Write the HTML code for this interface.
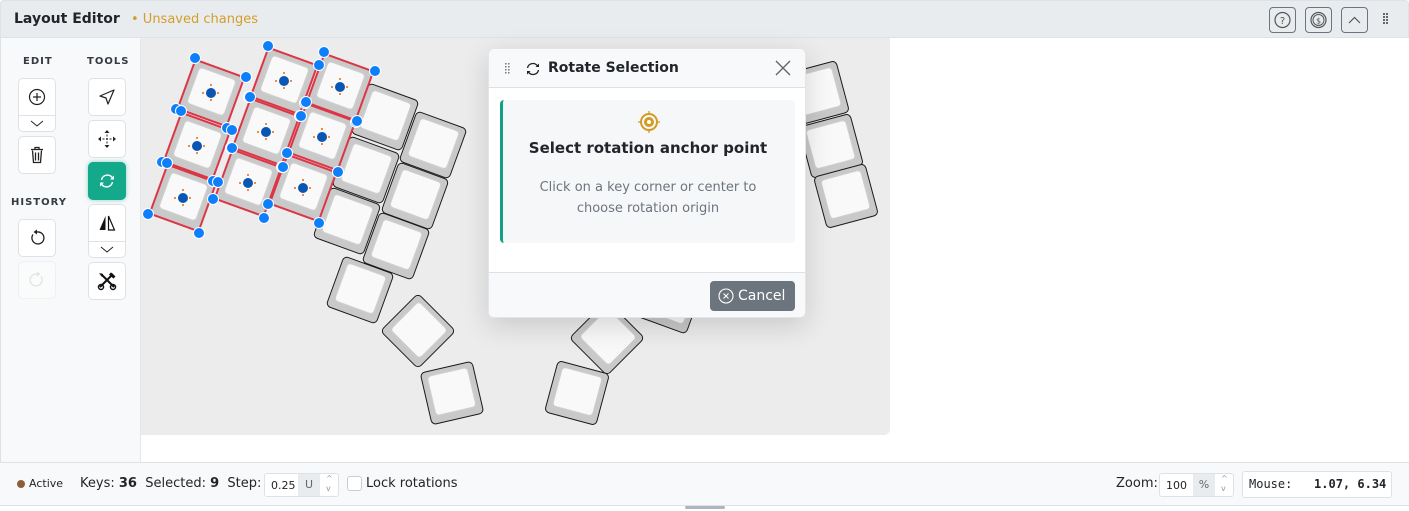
<!DOCTYPE html>
<html><head><meta charset="utf-8"><style>
*{box-sizing:border-box;margin:0;padding:0}
body{width:1409px;height:511px;overflow:hidden;background:#fff;font-family:"DejaVu Sans","Liberation Sans",sans-serif;position:relative;color:#212529}
.hdr{position:absolute;left:0;top:0;width:1409px;height:38px;background:#e9ecef;border:1px solid #dee2e6;border-radius:4px 4px 0 0}
.hdr .t{position:absolute;left:13px;top:10px;font-size:14px;font-weight:bold;color:#212529}
.hdr .u{position:absolute;left:130px;top:11px;font-size:13px;color:#d39e2a}
.hb{position:absolute;top:6px;width:27px;height:26px;border:1px solid #6c757d;border-radius:4px}
.side{position:absolute;left:0;top:38px;width:141px;height:424px;background:#f8f9fa;border-left:1px solid #dee2e6;border-right:1px solid #e5e7ea}
.lbl{position:absolute;font-size:10px;font-weight:bold;letter-spacing:1px;color:#343a40}
.btn{position:absolute;width:38px;background:#fff;border:1px solid #dee2e6;border-radius:5px;display:flex;align-items:center;justify-content:center}
.canvas{position:absolute;left:141px;top:38px;width:749px;height:397px;background:#ececec;border-radius:0 0 6px 0;overflow:hidden}
.key{position:absolute;width:54px;height:54px;margin:-27px 0 0 -27px;background:#c9c9c9;border:1.5px solid #1a1a1a;border-radius:5px}
.key:after{content:"";position:absolute;left:6px;top:5px;right:6px;bottom:8px;background:#f9f9f9;border-radius:3px;box-shadow:0 0 2px #ddd}
.key.sel{border:2px solid #dc3545;border-color:#dc3545}
.dot{position:absolute;width:12px;height:12px;margin:-6px 0 0 -6px;border-radius:50%;background:#0d7ffb;border:1.5px solid #fff}
.cd{position:absolute;width:10px;height:10px;margin:-5px 0 0 -5px;border-radius:50%;background:#0a56b3}
.tk{position:absolute;width:2px;height:2px;background:#f08a4b}
.dlg{position:absolute;left:488px;top:48px;width:318px;height:270px;background:#fff;border:1px solid #e3e5e8;border-radius:6px;box-shadow:0 8px 28px rgba(0,0,0,.15);overflow:hidden}
.foot{position:absolute;left:0;top:462px;width:1409px;height:44px;background:#f8f9fa;border-top:1px solid #dee2e6;border-bottom:1px solid #dee2e6;font-size:13px}
.inp{position:absolute;top:10px;height:24px;border:1px solid #dee2e6;border-radius:3px;background:#fff;font-size:11px}
</style></head><body>
<div class="hdr"><div class="t">Layout Editor</div><div class="u">• Unsaved changes</div>
<div class="hb" style="left:1268px"><svg width="25" height="24"><circle cx="12.5" cy="12" r="7.5" fill="none" stroke="#555" stroke-width="1.2"/><text x="12.5" y="16" font-size="10" text-anchor="middle" fill="#555" font-family="DejaVu Sans">?</text></svg></div>
<div class="hb" style="left:1304px"><svg width="25" height="24"><circle cx="12.5" cy="12" r="7.5" fill="none" stroke="#555" stroke-width="1.2"/><circle cx="12.5" cy="12" r="5.5" fill="none" stroke="#555" stroke-width="1"/><text x="12.5" y="15.5" font-size="8" text-anchor="middle" fill="#555" font-family="DejaVu Sans">$</text></svg></div>
<div class="hb" style="left:1340px"><svg width="25" height="24"><path d="M7 15l5.5-5.5L18 15" fill="none" stroke="#555" stroke-width="1.2"/></svg></div>
<svg style="position:absolute;left:1382px;top:12px" width="6" height="14"><g fill="#666"><rect x="0" y="0" width="2" height="2"/><rect x="3" y="0" width="2" height="2"/><rect x="0" y="3" width="2" height="2"/><rect x="3" y="3" width="2" height="2"/><rect x="0" y="6" width="2" height="2"/><rect x="3" y="6" width="2" height="2"/><rect x="0" y="9" width="2" height="2"/><rect x="3" y="9" width="2" height="2"/></g></svg>
</div>
<div class="side">
<div class="lbl" style="left:22px;top:18px">EDIT</div>
<div class="lbl" style="left:86px;top:18px">TOOLS</div>
<div class="lbl" style="left:10px;top:159px">HISTORY</div>
<div class="btn" style="left:17px;top:40px;height:54px;display:block"><svg width="36" height="52"><circle cx="18" cy="18" r="7.5" fill="none" stroke="#222" stroke-width="1.2"/><path d="M18 14v8M14 18h8" stroke="#222" stroke-width="1.2"/><path d="M0 36.5h36" stroke="#dee2e6"/><path d="M12 42l6 5 6-5" fill="none" stroke="#222" stroke-width="1"/></svg></div>
<div class="btn" style="left:17px;top:98px;height:38px"><svg width="16" height="18"><path d="M2 3.5h12M6 3.5V1.5h4v2M3.5 4.5l1 12h7l1-12M6.5 6.5v8M9.5 6.5v8" fill="none" stroke="#222" stroke-width="1.3"/></svg></div>
<div class="btn" style="left:17px;top:181px;height:38px"><svg width="18" height="18"><path d="M5 5.5A6 6 0 1 0 9 3" fill="none" stroke="#222" stroke-width="1.3"/><path d="M9 0.5v5l-3.5-2.5z" fill="#222"/></svg></div>
<div class="btn" style="left:17px;top:223px;height:38px;opacity:.35"><svg width="18" height="18"><path d="M13 5.5A6 6 0 1 1 9 3" fill="none" stroke="#bbb" stroke-width="1.3"/><path d="M9 0.5v5l3.5-2.5z" fill="#bbb"/></svg></div>
<div class="btn" style="left:87px;top:40px;height:38px"><svg width="18" height="18"><path d="M16 2L2 8l6 2 2 6z" fill="none" stroke="#222" stroke-width="1.2" stroke-linejoin="round"/></svg></div>
<div class="btn" style="left:87px;top:82px;height:38px"><svg width="20" height="20"><path d="M10 2v16M2 10h16" stroke="#222" stroke-width="1" stroke-dasharray="2 1.5"/><path d="M10 1l-2.5 3h5zM10 19l-2.5-3h5zM1 10l3-2.5v5zM19 10l-3-2.5v5z" fill="#222"/></svg></div>
<div class="btn" style="left:87px;top:124px;height:38px;background:#14a98b;border-color:#14a98b;box-shadow:0 0 4px rgba(20,169,139,.5)"><svg width="18" height="18"><path d="M3.5 8a6 6 0 0 1 11-2M14.5 10a6 6 0 0 1-11 2" fill="none" stroke="#fff" stroke-width="1.4"/><path d="M16 3.5v4h-4zM2 14.5v-4h4z" fill="#fff"/></svg></div>
<div class="btn" style="left:87px;top:166px;height:54px;display:block"><svg width="36" height="52"><path d="M16.5 11v14h-6z" fill="#111"/><path d="M19.5 11v14h6z" fill="none" stroke="#111" stroke-width="1.2"/><path d="M0 36.5h36" stroke="#dee2e6"/><path d="M12 42l6 5 6-5" fill="none" stroke="#222" stroke-width="1"/></svg></div>
<div class="btn" style="left:87px;top:224px;height:38px"><svg width="20" height="20"><path d="M4 3l13 13M16 3L3 16" stroke="#111" stroke-width="2"/><circle cx="4" cy="16" r="2.5" fill="none" stroke="#111" stroke-width="1.5"/><circle cx="16" cy="16" r="2.5" fill="none" stroke="#111" stroke-width="1.5"/><path d="M2 2l4 1 -1 3z" fill="#111"/><path d="M13 2.5l4.5 4" stroke="#111" stroke-width="3"/></svg></div>
</div>
<div class="canvas" id="cv"></div>
<div class="dlg">
<div style="position:absolute;left:0;top:0;width:318px;height:39px;background:#f8f9fa;border-bottom:1px solid #dee2e6"></div>
<svg style="position:absolute;left:16px;top:14px" width="5" height="12"><g fill="#777"><rect x="0" y="0" width="1.5" height="1.5"/><rect x="3" y="0" width="1.5" height="1.5"/><rect x="0" y="3" width="1.5" height="1.5"/><rect x="3" y="3" width="1.5" height="1.5"/><rect x="0" y="6" width="1.5" height="1.5"/><rect x="3" y="6" width="1.5" height="1.5"/><rect x="0" y="9" width="1.5" height="1.5"/><rect x="3" y="9" width="1.5" height="1.5"/></g></svg>
<svg style="position:absolute;left:36px;top:12px" width="16" height="16"><path d="M2.5 7a5.5 5.5 0 0 1 10-2M13.5 9a5.5 5.5 0 0 1-10 2" fill="none" stroke="#222" stroke-width="1.3"/><path d="M14 2.5v3.5h-3.5zM2 13.5V10h3.5z" fill="#222"/></svg>
<div style="position:absolute;left:59px;top:11px;font-size:14px;font-weight:bold">Rotate Selection</div>
<svg style="position:absolute;left:286px;top:11px" width="16" height="16"><path d="M1 1l14 14M15 1L1 15" stroke="#666" stroke-width="1.4"/></svg>
<div style="position:absolute;left:11px;top:51px;width:295px;height:143px;background:#f6f7f9;border-left:3px solid #13a085;border-radius:4px"></div>
<svg style="position:absolute;left:148px;top:61px" width="24" height="24"><circle cx="12" cy="12" r="8" fill="none" stroke="#d49a22" stroke-width="2"/><circle cx="12" cy="12" r="5" fill="#d49a22"/><circle cx="12" cy="12" r="2" fill="#fff"/><path d="M12 1v4M12 19v4M1 12h4M19 12h4" stroke="#d49a22" stroke-width="1.3"/></svg>
<div style="position:absolute;left:0;width:318px;top:90px;text-align:center;font-size:15px;font-weight:bold;color:#212529">Select rotation anchor point</div>
<div style="position:absolute;left:0;width:318px;top:128px;text-align:center;font-size:13px;line-height:21px;color:#6c757d">Click on a key corner or center to<br>choose rotation origin</div>
<div style="position:absolute;left:0;top:223px;width:318px;height:47px;background:#f8f9fa;border-top:1px solid #dee2e6"></div>
<div style="position:absolute;left:221px;top:232px;width:85px;height:30px;background:#6c757d;border-radius:4px;color:#fff;font-size:14px;line-height:30px;padding-left:28px">Cancel</div>
<svg style="position:absolute;left:229px;top:239px" width="16" height="16"><circle cx="8" cy="8" r="7" fill="none" stroke="#fff" stroke-width="1.1"/><path d="M5.5 5.5l5 5M10.5 5.5l-5 5" stroke="#fff" stroke-width="1.1"/></svg>
</div>
<div class="foot">
<div style="position:absolute;left:17px;top:17px;width:8px;height:8px;border-radius:50%;background:#8b5e3c"></div>
<div style="position:absolute;left:29px;top:14px;font-size:11px">Active</div>
<div style="position:absolute;left:80px;top:13px">Keys: <b>36</b>&nbsp; Selected: <b>9</b>&nbsp; Step:</div>
<div class="inp" style="left:264px;width:75px"><span style="position:absolute;left:6px;top:5px">0.25</span><span style="position:absolute;left:33px;top:0;width:22px;height:22px;background:#e9ecef;text-align:center;line-height:22px;color:#666">U</span><span style="position:absolute;left:61px;top:0;font-size:8px;color:#999;line-height:10px">^<br>v</span></div>
<div style="position:absolute;left:347px;top:13px;width:15px;height:15px;border:1px solid #ccc;border-radius:3px;background:#fff"></div>
<div style="position:absolute;left:366px;top:13px">Lock rotations</div>
<div style="position:absolute;left:1116px;top:13px">Zoom:</div>
<div class="inp" style="left:1159px;width:75px"><span style="position:absolute;left:6px;top:5px">100</span><span style="position:absolute;left:33px;top:0;width:22px;height:22px;background:#e9ecef;text-align:center;line-height:22px;color:#666">%</span><span style="position:absolute;left:61px;top:0;font-size:8px;color:#999;line-height:10px">^<br>v</span></div>
<div style="position:absolute;left:1242px;top:8px;width:150px;height:27px;border:1px solid #dee2e6;border-radius:3px;background:#fff;font-family:'DejaVu Sans Mono','Liberation Mono',monospace;font-size:12px;line-height:25px;padding-left:6px">Mouse:&nbsp;&nbsp; <b>1.07, 6.34</b></div>
</div>
<div style="position:absolute;left:685px;top:506px;width:40px;height:3px;background:#adb5bd;border-radius:2px"></div>
<script>
var cv=document.getElementById('cv'),ox=141,oy=38;
function key(x,y,a,s){var d=document.createElement('div');d.className='key'+(s?' sel':'');d.style.left=(x-ox)+'px';d.style.top=(y-oy)+'px';d.style.transform='rotate('+a+'deg)';cv.appendChild(d);}
var un=[[385,117,20],[433,145,20],[366,170,20],[415,196,20],[347,221,20],[396,246,20],[360,290,20],[418,331,45],[452,393,-13],[817,93,-15],[831,146,-15],[846,196,-15],[607,338,45],[577,393,15],[670,300,20]];
un.forEach(function(k){key(k[0],k[1],k[2],0)});
var se=[[211,93],[197,146],[183,198],[284,81],[266,132],[248,183],[340,87],[322,137],[303,188]];
se.forEach(function(k){key(k[0],k[1],20,1)});
var r=20*Math.PI/180,c=Math.cos(r),s=Math.sin(r);
function el(cl,x,y){var e=document.createElement('div');e.className=cl;e.style.left=(x-ox)+'px';e.style.top=(y-oy)+'px';cv.appendChild(e);}
se.forEach(function(k){
[[0,-8],[0,7],[-8,0],[7,0]].forEach(function(p){el('tk',k[0]+p[0]-1,k[1]+p[1]-1);});
el('cd',k[0],k[1]);
[[-27,-27],[27,-27],[27,27],[-27,27]].forEach(function(p){el('dot',k[0]+p[0]*c-p[1]*s,k[1]+p[0]*s+p[1]*c);});
});
</script>
</body></html>
